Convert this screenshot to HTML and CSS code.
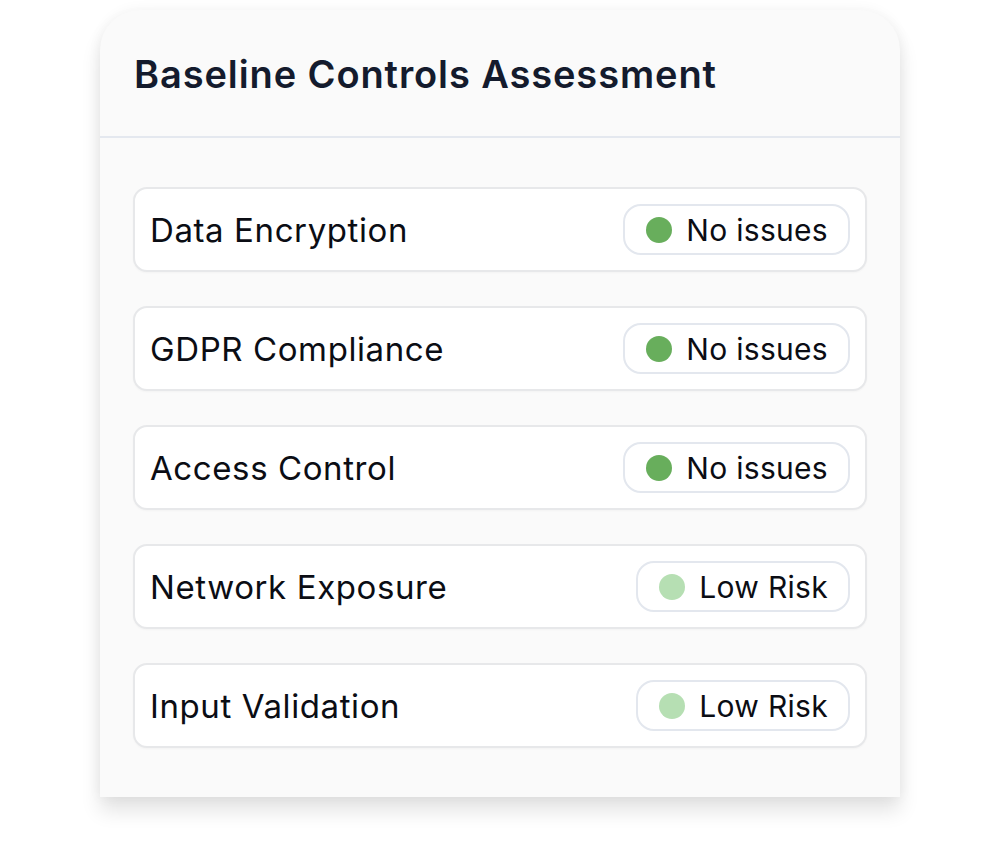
FILE: index.html
```html
<!DOCTYPE html>
<html lang="en">
<head>
<meta charset="utf-8">
<title>Baseline Controls Assessment</title>
<link rel="stylesheet" href="styles.css">
</head>
<body>
<div class="stage">
  <section class="card">
    <header class="card-head">
      <h1 class="title">Baseline Controls Assessment</h1>
    </header>
    <div class="list">
      <div class="row"><span class="label">Data Encryption</span><span class="badge"><span class="dot dot-ok"></span>No issues</span></div>
      <div class="row"><span class="label">GDPR Compliance</span><span class="badge"><span class="dot dot-ok"></span>No issues</span></div>
      <div class="row"><span class="label">Access Control</span><span class="badge"><span class="dot dot-ok"></span>No issues</span></div>
      <div class="row"><span class="label">Network Exposure</span><span class="badge"><span class="dot dot-low"></span>Low Risk</span></div>
      <div class="row"><span class="label">Input Validation</span><span class="badge"><span class="dot dot-low"></span>Low Risk</span></div>
    </div>
  </section>
</div>
</body>
</html>
```
FILE: styles.css
```css
* { box-sizing: border-box; }
html, body { margin: 0; padding: 0; background: #ffffff; }
body { font-family: Inter, "Noto Sans", sans-serif; }
.stage {
  width: 1000px;
  height: 848px;
  padding-top: 10px;
  display: flex;
  justify-content: center;
}
.card {
  width: 800px;
  height: 787px;
  background: #fafafa;
  border-radius: 40px 40px 0 0;
  box-shadow: 0 14px 20px rgba(0,0,0,0.11), 0 0 14px rgba(0,0,0,0.05);
}
.card-head {
  height: 128px;
  border-bottom: 2px solid #e4e8ef;
  padding: 41px 34px 0;
}
.title {
  margin: 0;
  font-size: 38px;
  line-height: 46px;
  font-weight: 600;
  color: #141b2d;
  letter-spacing: 0.9px;
}
.list {
  padding: 49px 33px 0 33px;
  display: flex;
  flex-direction: column;
  gap: 34px;
}
.row {
  height: 85px;
  background: #ffffff;
  border: 2px solid #e7e8ea;
  border-radius: 14px;
  display: flex;
  align-items: center;
  justify-content: space-between;
  padding: 0 15px 0 15px;
  box-shadow: 0 1px 2px rgba(0,0,0,0.03);
}
.label {
  font-size: 33px;
  letter-spacing: 0.6px;
  color: #0b0d14;
}
.badge {
  height: 51px;
  display: inline-flex;
  align-items: center;
  gap: 14px;
  padding: 0 20px 0 21px;
  border: 2px solid #e3e7ee;
  border-radius: 18px;
  font-size: 30px;
  letter-spacing: 0.3px;
  color: #0b0d14;
}
.dot {
  width: 26px;
  height: 26px;
  border-radius: 50%;
}
.dot-ok { background: #68ae5c; }
.dot-low { background: #b6dfb3; }
```
